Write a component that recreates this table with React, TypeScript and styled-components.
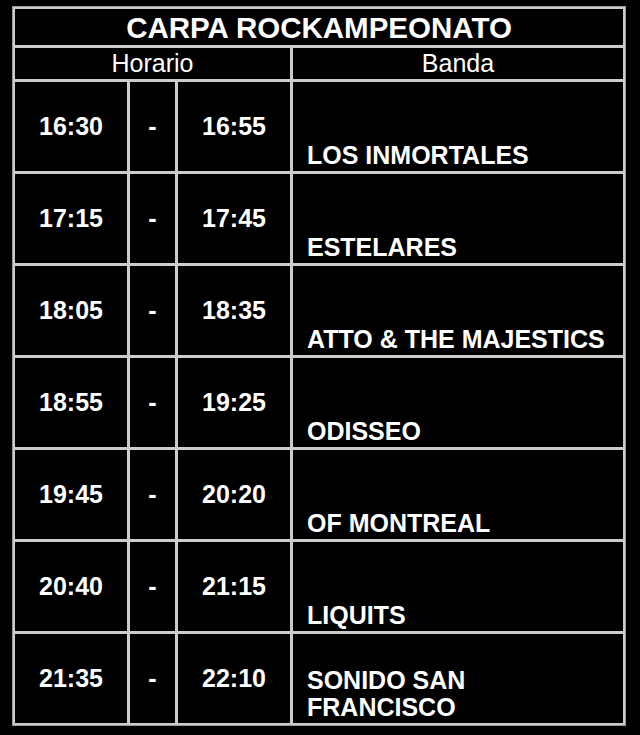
import React from 'react'
import styled, { createGlobalStyle } from 'styled-components'

const GlobalStyle = createGlobalStyle`
  html, body {
    margin: 0;
    padding: 0;
    background: #000;
  }
  body {
    font-family: 'Liberation Sans', Arial, sans-serif;
    color: #fff;
  }
`

const Page = styled.div`
  width: 640px;
  height: 735px;
  background: #000;
  padding: 6px 0 0 12px;
  box-sizing: border-box;
`

const Grid = styled.div`
  display: grid;
  grid-template-columns: 112px 45px 112px 330px;
  grid-template-rows: 36px 31px repeat(7, 89px);
  gap: 3px;
  padding: 3px;
  width: fit-content;
  background: #cbcbcb;
  box-shadow: inset 0 0 0 1px #9a9a9a;
`

const Cell = styled.div`
  background: #000;
  display: flex;
  align-items: center;
  justify-content: center;
  color: #fff;
`

const TitleCell = styled(Cell)`
  grid-column: 1 / span 4;
  font-size: 29.5px;
  font-weight: 700;
  padding-top: 1px;
`

const HeadCell = styled(Cell)<{ $span?: number }>`
  grid-column: span ${({ $span }) => $span ?? 1};
  font-size: 25px;
  font-weight: 400;
`

const TimeCell = styled(Cell)`
  font-size: 25px;
  font-weight: 700;
`

const BandCell = styled(Cell)`
  justify-content: flex-start;
  align-items: flex-end;
  padding: 0 8px 2px 14px;
  font-size: 25px;
  font-weight: 700;
  line-height: 27px;
`

const schedule = [
  { from: '16:30', to: '16:55', band: ['LOS INMORTALES'] },
  { from: '17:15', to: '17:45', band: ['ESTELARES'] },
  { from: '18:05', to: '18:35', band: ['ATTO & THE MAJESTICS'] },
  { from: '18:55', to: '19:25', band: ['ODISSEO'] },
  { from: '19:45', to: '20:20', band: ['OF MONTREAL'] },
  { from: '20:40', to: '21:15', band: ['LIQUITS'] },
  { from: '21:35', to: '22:10', band: ['SONIDO SAN', 'FRANCISCO'] },
]

const App: React.FC = () => {
  return (
    <Page>
      <GlobalStyle />
      <Grid>
        <TitleCell>CARPA ROCKAMPEONATO</TitleCell>
        <HeadCell $span={3}>Horario</HeadCell>
        <HeadCell>Banda</HeadCell>
        {schedule.map((row) => (
          <React.Fragment key={row.from}>
            <TimeCell>{row.from}</TimeCell>
            <TimeCell>-</TimeCell>
            <TimeCell>{row.to}</TimeCell>
            <BandCell>
              <span>
                {row.band.map((line, i) => (
                  <React.Fragment key={line}>
                    {i > 0 && <br />}
                    {line}
                  </React.Fragment>
                ))}
              </span>
            </BandCell>
          </React.Fragment>
        ))}
      </Grid>
    </Page>
  )
}

export default App
